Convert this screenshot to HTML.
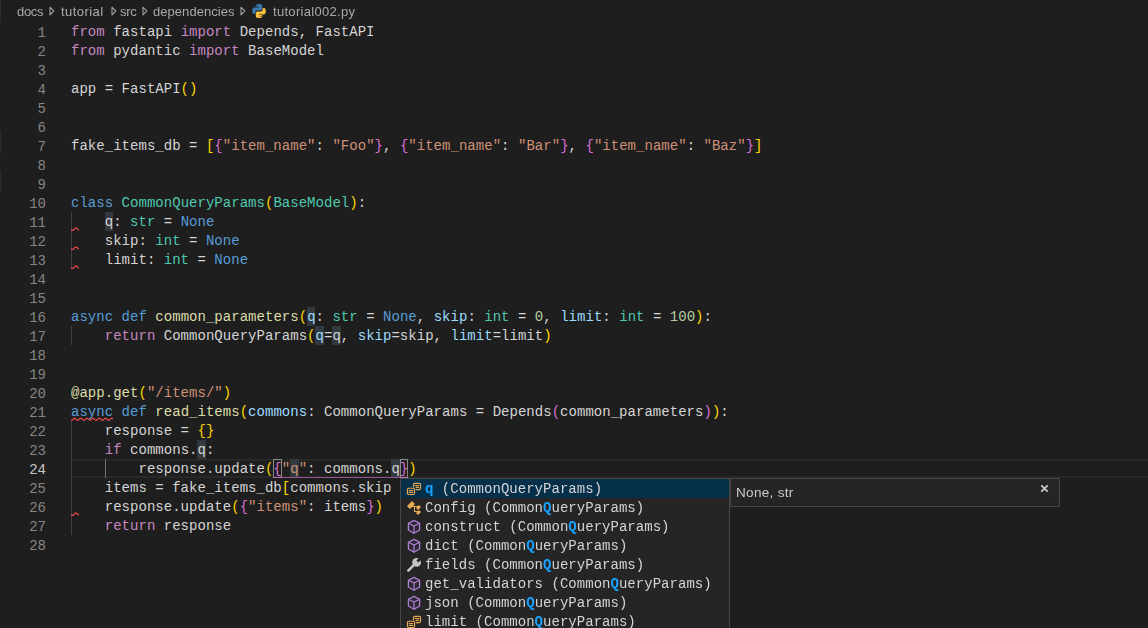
<!DOCTYPE html>
<html><head><meta charset="utf-8">
<style>
*{margin:0;padding:0;box-sizing:border-box}
html,body{width:1148px;height:628px;overflow:hidden;background:#1e1e1e}
body{position:relative;font-family:"Liberation Mono",monospace}
.bc{will-change:transform;position:absolute;left:0;top:0;height:22px;width:1148px;font-family:"Liberation Sans",sans-serif;font-size:13px;color:#a9a9a9}
.bc span{position:absolute;top:4px;white-space:nowrap;line-height:15px}
.chev{position:absolute;top:6px}
.ln{position:absolute;left:0;width:46px;text-align:right;font-size:14px;line-height:19px;color:#858585;white-space:pre}
.cl{position:absolute;left:71px;font-size:14px;letter-spacing:0.03px;line-height:19px;color:#d4d4d4;white-space:pre}
.k{color:#c586c0}.s{color:#569cd6}.c{color:#4ec9b0}.f{color:#dcdcaa}.t{color:#ce9178}.n{color:#b5cea8}.p{color:#9cdcfe}
.b1{color:#ffd700}.b2{color:#da70d6}.b3{color:#179fff}
.hl{background:#3a3d41}
.guide{position:absolute;width:1px;background:#404040}
.sq{position:absolute;height:3px}
.sw{will-change:transform;position:absolute;left:400px;top:478px;width:330px;height:160px;background:#252526;border:1px solid #454545}
.row{position:absolute;left:0;width:328px;height:19px;font-size:14px;line-height:19px;color:#d4d4d4;white-space:pre}
.row .lbl{position:absolute;left:24px;top:1px;letter-spacing:0.03px}
.row .ic{position:absolute}
.sel{background:#062f4a}
.m{color:#18a3ff;font-weight:bold}
.dw{will-change:transform;position:absolute;left:730px;top:478px;width:330px;height:29px;background:#252526;border:1px solid #454545;font-family:"Liberation Sans",sans-serif;font-size:14px;color:#d4d4d4}
</style></head><body>
<div style="position:absolute;left:0;top:0;width:1px;height:22px;background:#2c2c2c"></div><div style="position:absolute;left:0;top:131px;width:1px;height:23px;background:#2a2a2f"></div><div style="position:absolute;left:0;top:171px;width:1px;height:22px;background:#2a2a2f"></div><div style="position:absolute;left:72px;top:459px;width:1076px;height:19px;border-top:2px solid #282828;border-bottom:2px solid #282828"></div>
<div style="position:absolute;left:104.72px;top:212px;width:8.43px;height:19px;background:#33393f"></div>
<div style="position:absolute;left:307.04px;top:307px;width:8.43px;height:19px;background:#33393f"></div>
<div style="position:absolute;left:315.47px;top:326px;width:8.43px;height:19px;background:#33393f"></div>
<div style="position:absolute;left:332.33px;top:326px;width:8.43px;height:19px;background:#33393f"></div>
<div style="position:absolute;left:197.45px;top:440px;width:8.43px;height:19px;background:#33393f"></div>
<div style="position:absolute;left:290.18px;top:459px;width:8.43px;height:19px;background:#33393f"></div>
<div style="position:absolute;left:391.34px;top:459px;width:8.43px;height:19px;background:#33393f"></div>
<div class="guide" style="left:71px;top:212px;height:57px;background:#404040"></div>
<div class="guide" style="left:71px;top:326px;height:19px;background:#404040"></div>
<div class="guide" style="left:71px;top:421px;height:114px;background:#404040"></div>
<div class="guide" style="left:105px;top:459px;height:19px;background:#707070"></div>
<div class="ln" style="top:24px;color:#858585">1</div>
<div class="cl" style="top:23px"><span class="k">from</span> fastapi <span class="k">import</span> Depends, FastAPI</div>
<div class="ln" style="top:43px;color:#858585">2</div>
<div class="cl" style="top:42px"><span class="k">from</span> pydantic <span class="k">import</span> BaseModel</div>
<div class="ln" style="top:62px;color:#858585">3</div>
<div class="ln" style="top:81px;color:#858585">4</div>
<div class="cl" style="top:80px">app = FastAPI<span class="b1">()</span></div>
<div class="ln" style="top:100px;color:#858585">5</div>
<div class="ln" style="top:119px;color:#858585">6</div>
<div class="ln" style="top:138px;color:#858585">7</div>
<div class="cl" style="top:137px">fake_items_db = <span class="b1">[</span><span class="b2">{</span><span class="t">&quot;item_name&quot;</span>: <span class="t">&quot;Foo&quot;</span><span class="b2">}</span>, <span class="b2">{</span><span class="t">&quot;item_name&quot;</span>: <span class="t">&quot;Bar&quot;</span><span class="b2">}</span>, <span class="b2">{</span><span class="t">&quot;item_name&quot;</span>: <span class="t">&quot;Baz&quot;</span><span class="b2">}</span><span class="b1">]</span></div>
<div class="ln" style="top:157px;color:#858585">8</div>
<div class="ln" style="top:176px;color:#858585">9</div>
<div class="ln" style="top:195px;color:#858585">10</div>
<div class="cl" style="top:194px"><span class="s">class</span> <span class="c">CommonQueryParams</span><span class="b1">(</span><span class="c">BaseModel</span><span class="b1">)</span>:</div>
<div class="ln" style="top:214px;color:#858585">11</div>
<div class="cl" style="top:213px">    q: <span class="c">str</span> = <span class="s">None</span></div>
<div class="ln" style="top:233px;color:#858585">12</div>
<div class="cl" style="top:232px">    skip: <span class="c">int</span> = <span class="s">None</span></div>
<div class="ln" style="top:252px;color:#858585">13</div>
<div class="cl" style="top:251px">    limit: <span class="c">int</span> = <span class="s">None</span></div>
<div class="ln" style="top:271px;color:#858585">14</div>
<div class="ln" style="top:290px;color:#858585">15</div>
<div class="ln" style="top:309px;color:#858585">16</div>
<div class="cl" style="top:308px"><span class="s">async</span> <span class="s">def</span> <span class="f">common_parameters</span><span class="b1">(</span><span class="p">q</span>: <span class="c">str</span> = <span class="s">None</span>, <span class="p">skip</span>: <span class="c">int</span> = <span class="n">0</span>, <span class="p">limit</span>: <span class="c">int</span> = <span class="n">100</span><span class="b1">)</span>:</div>
<div class="ln" style="top:328px;color:#858585">17</div>
<div class="cl" style="top:327px">    <span class="k">return</span> CommonQueryParams<span class="b1">(</span><span class="p">q</span>=q, <span class="p">skip</span>=skip, <span class="p">limit</span>=limit<span class="b1">)</span></div>
<div class="ln" style="top:347px;color:#858585">18</div>
<div class="ln" style="top:366px;color:#858585">19</div>
<div class="ln" style="top:385px;color:#858585">20</div>
<div class="cl" style="top:384px"><span class="f">@app.get</span><span class="b1">(</span><span class="t">&quot;/items/&quot;</span><span class="b1">)</span></div>
<div class="ln" style="top:404px;color:#858585">21</div>
<div class="cl" style="top:403px"><span class="s">async</span> <span class="s">def</span> <span class="f">read_items</span><span class="b1">(</span><span class="p">commons</span>: CommonQueryParams = Depends<span class="b2">(</span>common_parameters<span class="b2">)</span><span class="b1">)</span>:</div>
<div class="ln" style="top:423px;color:#858585">22</div>
<div class="cl" style="top:422px">    response = <span class="b1">{}</span></div>
<div class="ln" style="top:442px;color:#858585">23</div>
<div class="cl" style="top:441px">    <span class="k">if</span> commons.q:</div>
<div class="ln" style="top:461px;color:#c6c6c6">24</div>
<div class="cl" style="top:460px">        response.update<span class="b1">(</span><span class="b2 bm">{</span><span class="t">&quot;</span><span class="t">q</span><span class="t">&quot;</span>: commons.q<span class="b2 bm">}</span><span class="b1">)</span></div>
<div class="ln" style="top:480px;color:#858585">25</div>
<div class="cl" style="top:479px">    items = fake_items_db<span class="b1">[</span>commons.skip : commons.skip + commons.limit<span class="b1">]</span></div>
<div class="ln" style="top:499px;color:#858585">26</div>
<div class="cl" style="top:498px">    response.update<span class="b1">(</span><span class="b2">{</span><span class="t">&quot;items&quot;</span>: items<span class="b2">}</span><span class="b1">)</span></div>
<div class="ln" style="top:518px;color:#858585">27</div>
<div class="cl" style="top:517px">    <span class="k">return</span> response</div>
<div class="ln" style="top:537px;color:#858585">28</div>
<svg style="position:absolute;left:71px;top:227px" width="8" height="4"><polyline points="0.00,2.47 0.25,2.72 0.50,2.95 0.75,3.14 1.00,3.28 1.25,3.37 1.50,3.40 1.75,3.37 2.00,3.28 2.25,3.14 2.50,2.95 2.75,2.72 3.00,2.47 3.25,2.20 3.50,1.93 3.75,1.68 4.00,1.45 4.25,1.26 4.50,1.12 4.75,1.03 5.00,1.00 5.25,1.03 5.50,1.12 5.75,1.26 6.00,1.45 6.25,1.68 6.50,1.93 6.75,2.20 7.00,2.47 7.25,2.72 7.50,2.95 7.75,3.14 8.00,3.28" stroke="#f14c4c" stroke-width="1.2" fill="none"/></svg>
<svg style="position:absolute;left:71px;top:246px" width="8" height="4"><polyline points="0.00,2.47 0.25,2.72 0.50,2.95 0.75,3.14 1.00,3.28 1.25,3.37 1.50,3.40 1.75,3.37 2.00,3.28 2.25,3.14 2.50,2.95 2.75,2.72 3.00,2.47 3.25,2.20 3.50,1.93 3.75,1.68 4.00,1.45 4.25,1.26 4.50,1.12 4.75,1.03 5.00,1.00 5.25,1.03 5.50,1.12 5.75,1.26 6.00,1.45 6.25,1.68 6.50,1.93 6.75,2.20 7.00,2.47 7.25,2.72 7.50,2.95 7.75,3.14 8.00,3.28" stroke="#f14c4c" stroke-width="1.2" fill="none"/></svg>
<svg style="position:absolute;left:71px;top:265px" width="8" height="4"><polyline points="0.00,2.47 0.25,2.72 0.50,2.95 0.75,3.14 1.00,3.28 1.25,3.37 1.50,3.40 1.75,3.37 2.00,3.28 2.25,3.14 2.50,2.95 2.75,2.72 3.00,2.47 3.25,2.20 3.50,1.93 3.75,1.68 4.00,1.45 4.25,1.26 4.50,1.12 4.75,1.03 5.00,1.00 5.25,1.03 5.50,1.12 5.75,1.26 6.00,1.45 6.25,1.68 6.50,1.93 6.75,2.20 7.00,2.47 7.25,2.72 7.50,2.95 7.75,3.14 8.00,3.28" stroke="#f14c4c" stroke-width="1.2" fill="none"/></svg>
<svg style="position:absolute;left:71px;top:417px" width="42" height="4"><polyline points="0.00,3.22 0.25,3.29 0.50,3.29 0.75,3.24 1.00,3.12 1.25,2.95 1.50,2.74 1.75,2.50 2.00,2.25 2.25,2.00 2.50,1.77 2.75,1.58 3.00,1.43 3.25,1.33 3.50,1.30 3.75,1.33 4.00,1.43 4.25,1.58 4.50,1.77 4.75,2.00 5.00,2.25 5.25,2.50 5.50,2.74 5.75,2.95 6.00,3.12 6.25,3.24 6.50,3.29 6.75,3.29 7.00,3.22 7.25,3.09 7.50,2.91 7.75,2.69 8.00,2.45 8.25,2.20 8.50,1.95 8.75,1.73 9.00,1.54 9.25,1.40 9.50,1.32 9.75,1.30 10.00,1.35 10.25,1.45 10.50,1.61 10.75,1.81 11.00,2.05 11.25,2.30 11.50,2.55 11.75,2.79 12.00,2.99 12.25,3.15 12.50,3.25 12.75,3.30 13.00,3.28 13.25,3.20 13.50,3.06 13.75,2.87 14.00,2.65 14.25,2.40 14.50,2.15 14.75,1.91 15.00,1.69 15.25,1.51 15.50,1.38 15.75,1.31 16.00,1.31 16.25,1.36 16.50,1.48 16.75,1.65 17.00,1.86 17.25,2.10 17.50,2.35 17.75,2.60 18.00,2.83 18.25,3.02 18.50,3.17 18.75,3.27 19.00,3.30 19.25,3.27 19.50,3.17 19.75,3.02 20.00,2.83 20.25,2.60 20.50,2.35 20.75,2.10 21.00,1.86 21.25,1.65 21.50,1.48 21.75,1.36 22.00,1.31 22.25,1.31 22.50,1.38 22.75,1.51 23.00,1.69 23.25,1.91 23.50,2.15 23.75,2.40 24.00,2.65 24.25,2.87 24.50,3.06 24.75,3.20 25.00,3.28 25.25,3.30 25.50,3.25 25.75,3.15 26.00,2.99 26.25,2.79 26.50,2.55 26.75,2.30 27.00,2.05 27.25,1.81 27.50,1.61 27.75,1.45 28.00,1.35 28.25,1.30 28.50,1.32 28.75,1.40 29.00,1.54 29.25,1.73 29.50,1.95 29.75,2.20 30.00,2.45 30.25,2.69 30.50,2.91 30.75,3.09 31.00,3.22 31.25,3.29 31.50,3.29 31.75,3.24 32.00,3.12 32.25,2.95 32.50,2.74 32.75,2.50 33.00,2.25 33.25,2.00 33.50,1.77 33.75,1.58 34.00,1.43 34.25,1.33 34.50,1.30 34.75,1.33 35.00,1.43 35.25,1.58 35.50,1.77 35.75,2.00 36.00,2.25 36.25,2.50 36.50,2.74 36.75,2.95 37.00,3.12 37.25,3.24 37.50,3.29 37.75,3.29 38.00,3.22 38.25,3.09 38.50,2.91 38.75,2.69 39.00,2.45 39.25,2.20 39.50,1.95 39.75,1.73 40.00,1.54 40.25,1.40 40.50,1.32 40.75,1.30 41.00,1.35 41.25,1.45 41.50,1.61 41.75,1.81 42.00,2.05" stroke="#f14c4c" stroke-width="1.2" fill="none"/></svg>
<svg style="position:absolute;left:71px;top:512px" width="8" height="4"><polyline points="0.00,2.47 0.25,2.72 0.50,2.95 0.75,3.14 1.00,3.28 1.25,3.37 1.50,3.40 1.75,3.37 2.00,3.28 2.25,3.14 2.50,2.95 2.75,2.72 3.00,2.47 3.25,2.20 3.50,1.93 3.75,1.68 4.00,1.45 4.25,1.26 4.50,1.12 4.75,1.03 5.00,1.00 5.25,1.03 5.50,1.12 5.75,1.26 6.00,1.45 6.25,1.68 6.50,1.93 6.75,2.20 7.00,2.47 7.25,2.72 7.50,2.95 7.75,3.14 8.00,3.28" stroke="#f14c4c" stroke-width="1.2" fill="none"/></svg>
<div style="position:absolute;left:273.32px;top:459px;width:8.43px;height:19px;border:1px solid #888"></div>
<div style="position:absolute;left:399.77px;top:459px;width:8.43px;height:19px;border:1px solid #888"></div>
<div style="position:absolute;left:273.32px;top:477px;width:134.88px;height:1px;background:rgba(218,112,214,.6)"></div>
<div class="sw">
<div class="row sel" style="top:0px"><svg class="ic" width="18" height="16" viewBox="0 0 18 16" style="left:3px;top:2px"><g fill="none" stroke="#e8ab53" stroke-width="1.15" stroke-linecap="round"><path d="M9.55 5.9V3.55a1.2 1.2 0 0 1 1.2-1.2h4.6a1.2 1.2 0 0 1 1.2 1.2v3.8a1.2 1.2 0 0 1-1.2 1.2h-3.25"/><rect x="3.45" y="7.25" width="7.1" height="6.2" rx="1.2"/><path d="M5.2 9.6h3.6M5.2 11.5h3.6M11.3 4.5h3.4M12 6.4h2.7"/></g></svg><span class="lbl"><span class="m">q</span> (CommonQueryParams)</span></div>
<div class="row" style="top:19px"><svg class="ic" width="16" height="16" viewBox="0 0 16 16" style="left:5px;top:2px"><path d="M13 10l2 2-3 3-2-2 1-1H8V7H6L4 9 1 6l5-5 3 3-2 2h5l1-1 2 2-3 3-2-2 1-1H9v4l2.999.002L13 10z" fill="#e8ab53"/></svg><span class="lbl">Config (Common<span class="m">Q</span>ueryParams)</span></div>
<div class="row" style="top:38px"><svg class="ic" width="16" height="16" viewBox="0 0 16 16" style="left:5px;top:2px"><g fill="none" stroke="#b180d7" stroke-width="1.25" stroke-linejoin="round"><path d="M8 1.4l5.6 2.8v6.8L8 14.2 2.4 11V4.2z" fill="#2c2934"/><path d="M2.4 4.2L8 7l5.6-2.8M8 7v7.2"/></g></svg><span class="lbl">construct (Common<span class="m">Q</span>ueryParams)</span></div>
<div class="row" style="top:57px"><svg class="ic" width="16" height="16" viewBox="0 0 16 16" style="left:5px;top:2px"><g fill="none" stroke="#b180d7" stroke-width="1.25" stroke-linejoin="round"><path d="M8 1.4l5.6 2.8v6.8L8 14.2 2.4 11V4.2z" fill="#2c2934"/><path d="M2.4 4.2L8 7l5.6-2.8M8 7v7.2"/></g></svg><span class="lbl">dict (Common<span class="m">Q</span>ueryParams)</span></div>
<div class="row" style="top:76px"><svg class="ic" width="16" height="16" viewBox="0 0 16 16" style="left:5px;top:2px"><circle cx="10.6" cy="5.3" r="4.4" fill="#c5c5c5"/><path d="M11.3 4.6L16 -0.1" stroke="#252526" stroke-width="2.8"/><path d="M10.2 5.7L2.3 13.6" stroke="#c5c5c5" stroke-width="2.6" stroke-linecap="round"/></svg><span class="lbl">fields (Common<span class="m">Q</span>ueryParams)</span></div>
<div class="row" style="top:95px"><svg class="ic" width="16" height="16" viewBox="0 0 16 16" style="left:5px;top:2px"><g fill="none" stroke="#b180d7" stroke-width="1.25" stroke-linejoin="round"><path d="M8 1.4l5.6 2.8v6.8L8 14.2 2.4 11V4.2z" fill="#2c2934"/><path d="M2.4 4.2L8 7l5.6-2.8M8 7v7.2"/></g></svg><span class="lbl">get_validators (Common<span class="m">Q</span>ueryParams)</span></div>
<div class="row" style="top:114px"><svg class="ic" width="16" height="16" viewBox="0 0 16 16" style="left:5px;top:2px"><g fill="none" stroke="#b180d7" stroke-width="1.25" stroke-linejoin="round"><path d="M8 1.4l5.6 2.8v6.8L8 14.2 2.4 11V4.2z" fill="#2c2934"/><path d="M2.4 4.2L8 7l5.6-2.8M8 7v7.2"/></g></svg><span class="lbl">json (Common<span class="m">Q</span>ueryParams)</span></div>
<div class="row" style="top:133px"><svg class="ic" width="18" height="16" viewBox="0 0 18 16" style="left:3px;top:2px"><g fill="none" stroke="#e8ab53" stroke-width="1.15" stroke-linecap="round"><path d="M9.55 5.9V3.55a1.2 1.2 0 0 1 1.2-1.2h4.6a1.2 1.2 0 0 1 1.2 1.2v3.8a1.2 1.2 0 0 1-1.2 1.2h-3.25"/><rect x="3.45" y="7.25" width="7.1" height="6.2" rx="1.2"/><path d="M5.2 9.6h3.6M5.2 11.5h3.6M11.3 4.5h3.4M12 6.4h2.7"/></g></svg><span class="lbl">limit (Common<span class="m">Q</span>ueryParams)</span></div>
</div>
<div class="dw"><span style="position:absolute;left:5px;top:6px;font-size:13.6px;letter-spacing:0.28px;color:#cccccc">None, str</span><svg style="position:absolute;left:309px;top:5px" width="9" height="9"><path d="M1.3 1.3L7.7 7.7M7.7 1.3L1.3 7.7" stroke="#c5c5c5" stroke-width="1.9"/></svg></div><div class="bc">
<span style="left:17px;letter-spacing:-0.35px">docs</span><svg class="chev" style="left:49px" width="6" height="10"><path d="M1 1.2L4.8 5 1 8.8z" fill="none" stroke="#a0a0a0" stroke-width="1.1" stroke-linejoin="round"/></svg>
<span style="left:61px;letter-spacing:0.45px">tutorial</span><svg class="chev" style="left:111px" width="6" height="10"><path d="M1 1.2L4.8 5 1 8.8z" fill="none" stroke="#a0a0a0" stroke-width="1.1" stroke-linejoin="round"/></svg>
<span style="left:120px;letter-spacing:-0.3px">src</span><svg class="chev" style="left:142px" width="6" height="10"><path d="M1 1.2L4.8 5 1 8.8z" fill="none" stroke="#a0a0a0" stroke-width="1.1" stroke-linejoin="round"/></svg>
<span style="left:153px;letter-spacing:0.05px">dependencies</span><svg class="chev" style="left:240px" width="6" height="10"><path d="M1 1.2L4.8 5 1 8.8z" fill="none" stroke="#a0a0a0" stroke-width="1.1" stroke-linejoin="round"/></svg>
<svg style="position:absolute;left:251px;top:3px" width="16" height="16" viewBox="0 0 16 16"><path d="M7.9 1C4.5 1 4.7 2.5 4.7 2.5v1.5h3.3v.5H3.4S1.2 4.2 1.2 7.7s1.9 3.3 1.9 3.3h1.2V9.4s-.1-1.9 1.9-1.9h3.2s1.8 0 1.8-1.8V2.8S11.5 1 7.9 1zM6.1 2.1a.6.6 0 110 1.2.6.6 0 010-1.2z" fill="#3c78aa"/><path d="M8.1 15c3.4 0 3.2-1.5 3.2-1.5V12H8v-.5h4.6s2.2.3 2.2-3.2-1.9-3.3-1.9-3.3h-1.2v1.6s.1 1.9-1.9 1.9H6.6S4.8 8.5 4.8 10.3v2.9S4.5 15 8.1 15zm1.8-1.1a.6.6 0 110-1.2.6.6 0 010 1.2z" fill="#f9c03d"/></svg>
<span style="left:273px;letter-spacing:0.3px">tutorial002.py</span>
</div>

</body></html>
